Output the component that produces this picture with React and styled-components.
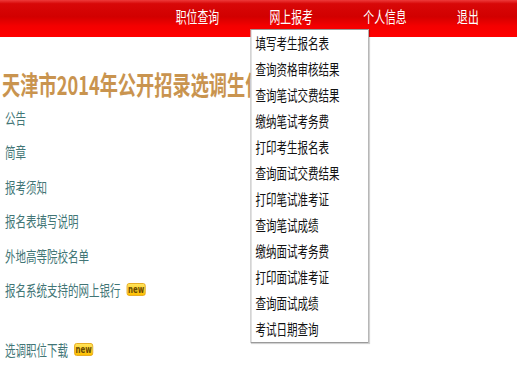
import React from "react";
import styled, { createGlobalStyle } from "styled-components";

const SX = 0.7;

const Global = createGlobalStyle`
  html, body { margin: 0; padding: 0; background: #fff; overflow: hidden; }
  body { font-family: "Noto Sans CJK SC", "Noto Sans", sans-serif; }
`;

const Page = styled.div`
  width: ${517 / SX}px;
  height: 373px;
  transform: scaleX(${SX});
  transform-origin: 0 0;
  overflow: hidden;
`;

const TopBar = styled.div`
  height: 37px;
  background: linear-gradient(
    to bottom,
    #ee3a3a 0%,
    #d80808 10%,
    #d20000 45%,
    #f40000 70%,
    #ff0000 100%
  );
  display: flex;
  padding-left: 227px;
`;

const NavItem = styled.div`
  position: relative;
  width: 134px;
  flex: none;
  padding-left: 24px;
  box-sizing: border-box;
  height: 33px;
  line-height: 33px;
  font-size: 15.5px;
  color: #fff;
  white-space: nowrap;
`;

const Menu = styled.ul`
  position: absolute;
  top: 29px;
  left: -3px;
  z-index: 5;
  margin: 0;
  padding: 0;
  list-style: none;
  width: 169px;
  box-sizing: border-box;
  background: #fff;
  border-style: solid;
  border-color: #9a9a9a;
  border-width: 1px 1.4px;
  box-shadow: 1px 1px 1px rgba(0, 0, 0, 0.18);
`;

const MenuItem = styled.li`
  height: 26px;
  line-height: 26px;
  padding-left: 6px;
  font-size: 15px;
  color: #111;
  white-space: nowrap;
`;

const Title = styled.h1`
  margin: 32px 0 0 3px;
  height: 30px;
  line-height: 30px;
  font-size: 26px;
  font-weight: 700;
  color: #c9944f;
  white-space: nowrap;
`;

const LinkList = styled.div`
  display: flex;
  flex-direction: column;
  padding-left: 7px;
  margin-top: 1px;
`;

const LinkRow = styled.div`
  display: flex;
  align-items: center;
  height: 34.5px;
  margin-top: ${(p) => (p.$gap ? "25px" : "0")};
  font-size: 15px;
  color: #417575;
  white-space: nowrap;
`;

const NewBadge = styled.span`
  margin-left: 9px;
  width: 27px;
  height: 13px;
  box-sizing: border-box;
  border: 1px solid #e39f00;
  border-radius: 3px;
  background: linear-gradient(to bottom, #ffe45a, #ffc000);
  font-family: "DejaVu Sans", sans-serif;
  font-size: 10px;
  font-weight: 700;
  line-height: 11px;
  color: #6a4a00;
  text-align: center;
`;

const navs = ["职位查询", "网上报考", "个人信息", "退出"];
const menu = [
  "填写考生报名表",
  "查询资格审核结果",
  "查询笔试交费结果",
  "缴纳笔试考务费",
  "打印考生报名表",
  "查询面试交费结果",
  "打印笔试准考证",
  "查询笔试成绩",
  "缴纳面试考务费",
  "打印面试准考证",
  "查询面试成绩",
  "考试日期查询",
];
const links = [
  { t: "公告" },
  { t: "简章" },
  { t: "报考须知" },
  { t: "报名表填写说明" },
  { t: "外地高等院校名单" },
  { t: "报名系统支持的网上银行", n: true },
  { t: "选调职位下载", n: true, gap: true },
];

export default function App() {
  return (
    <>
      <Global />
      <Page>
        <TopBar>
          {navs.map((n, i) => (
            <NavItem key={n}>
              {n}
              {i === 1 && (
                <Menu>
                  {menu.map((m) => (
                    <MenuItem key={m}>{m}</MenuItem>
                  ))}
                </Menu>
              )}
            </NavItem>
          ))}
        </TopBar>
        <Title>天津市2014年公开招录选调生信息系统</Title>
        <LinkList>
          {links.map((l) => (
            <LinkRow key={l.t} $gap={l.gap}>
              {l.t}
              {l.n && <NewBadge>new</NewBadge>}
            </LinkRow>
          ))}
        </LinkList>
      </Page>
    </>
  );
}
